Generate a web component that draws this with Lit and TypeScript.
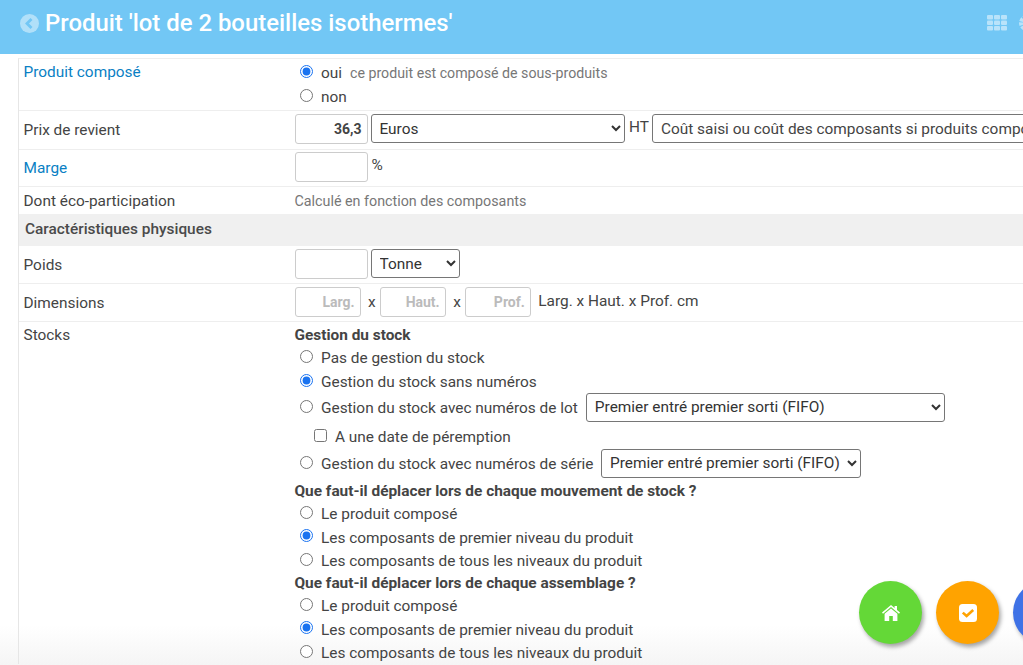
import { LitElement, html, svg, css } from "lit";
import { customElement } from "lit/decorators.js";

const radio = (name: string, label: string, checked = false) => html`
  <label class="opt"><input type="radio" name=${name} ?checked=${checked} /><span>${label}</span></label>`;
const radioS = (name: string, label: string, checked = false) => html`
  <label class="opt slim"><input type="radio" name=${name} ?checked=${checked} /><span>${label}</span></label>`;

@customElement("app-root")
export class AppRoot extends LitElement {
  static styles = css`
    :host {
      display: block;
      position: relative;
      width: 1023px;
      height: 665px;
      overflow: hidden;
      background: linear-gradient(#fff 625px, #f5f5f5 665px);
      font-family: Roboto, "Liberation Sans", sans-serif;
      font-size: 15.4px;
      color: #444;
    }
    * { box-sizing: border-box; }
    .header {
      height: 54px;
      background: #72c7f5;
      display: flex;
      align-items: center;
      padding: 0 0 8px 20px;
      color: #fff;
      white-space: nowrap;
    }
    .back { width: 19px; height: 19px; flex: none; margin-right: 6px; }
    h1 { margin: 0; font-size: 23.9px; font-weight: 500; flex: 1; }
    .apps { width: 20px; height: 16px; flex: none; margin-right: 11px; }
    .gear { width: 18px; height: 18px; flex: none; margin-right: -13px; }
    .main {
      margin: 4px 0 0 18px;
      border-left: 1px solid #e6e6e6;
      border-top: 1px solid #eee;
      width: 1100px;
    }
    .row {
      display: grid;
      grid-template-columns: 271px 1fr;
      padding-left: 4.5px;
      border-bottom: 1px solid #eee;
    }
    .row > .lab { line-height: 18px; }
    .blue { color: #0a7fc4; }
    .r1 { height: 52px; padding-top: 1px; }
    .r1 .lab { padding-top: 3px; }
    .r2 { height: 39px; padding-top: 3px; }
    .r2 .lab { padding-top: 7px; }
    .r3 { height: 37px; padding-top: 2px; }
    .r3 .lab { padding-top: 7px; }
    .r4 { height: 27px; align-items: center; padding-top: 1px; border-bottom: 0; }
    .r5 { height: 38px; padding-top: 3px; }
    .r5 .lab { padding-top: 7px; }
    .stocks { border-bottom: 0; padding-top: 4px; }
    .section {
      height: 32px;
      background: #f0f0f0;
      padding: 0 0 2px 6px;
      display: flex;
      align-items: center;
      font-weight: 500;
      color: #4a4a4a;
    }
    .val { display: flex; align-items: flex-start; gap: 3px; white-space: nowrap; }
    .val.mid { align-items: center; }
    .val > span { line-height: 26px; }
    .opt { display: flex; align-items: center; height: 24px; color: #444; white-space: nowrap; }
    .opt > span { padding-top: 2px; }
    .opt.slim { height: 23.5px; }
    .opt input { margin: 0 8.5px 2px 5px; width: 13px; height: 13px; flex: none; accent-color: #1a73f0; }
    .opt .hint { color: #777; font-size: 14.2px; margin-left: 8px; }
    .muted { color: #777; font-size: 14.3px; }
    .num {
      font: inherit;
      font-size: 14px;
      width: 73px;
      height: 30px;
      border: 1px solid #ccc;
      border-radius: 3px;
      background: #fff;
      text-align: right;
      padding: 0 5px;
      font-weight: 700;
      color: #444;
      outline: none;
    }
    .dim { width: 66px; }
    .dim::placeholder { color: #bbb; font-weight: 700; opacity: 1; }
    select {
      font: inherit;
      height: 29px;
      border: 1px solid #767676;
      border-radius: 3px;
      background: #fff;
      color: #333;
      padding: 0 4px;
    }
    .txt {
      font: inherit;
      width: 420px;
      height: 29px;
      border: 1px solid #767676;
      border-radius: 3px;
      padding: 0 8px;
      color: #444;
      outline: none;
    }
    .val > .x { margin: 0 1px 0 4.5px; line-height: 30px; }
    .val > .dimtext { margin-left: 4.5px; line-height: 28px; }
    .ht { margin-left: 1.5px; }
    .pct { margin-left: 1px; }
    .stack { display: flex; flex-direction: column; }
    h4 { margin: 0; font-size: 15.4px; font-weight: 700; color: #444; line-height: 18px; height: 19px; }
    .h-move { margin: 6.5px 0 1px; }
    .h-build { margin: 1.5px 0 1px; }
    .opt.tall { height: 28px; }
    .opt.tall2 { height: 24px; }
    .opt.chk { height: 30px; padding-left: 14px; }
    .opt.chk input { margin-left: 5px; }
    .opt select { margin-left: 8px; }
    .opt .s-euro { margin: 0; }
    .opt.tall2 select { margin-left: 7.5px; }
    .w-euro { width: 254px; }
    .w-tonne { width: 89px; }
    .w-lot { width: 359px; }
    .w-serie { width: 260px; }
    .fab {
      position: absolute;
      top: 581px;
      width: 63px;
      height: 63px;
      border-radius: 50%;
      display: flex;
      align-items: center;
      justify-content: center;
      box-shadow: 2px 3px 4px rgba(0, 0, 0, 0.35);
    }
    .home { left: 859px; background: #64d837; }
    .todo { left: 936px; background: #ffa300; }
    .third { left: 1013px; background: #3f72e6; }
  `;

  render() {
    return html`
      <div class="header">
        <svg class="back" viewBox="0 0 19 19">
          <circle cx="9.5" cy="9.5" r="9.5" fill="#fff" opacity=".45" />
          <path d="M11.5 5 7 9.5l4.5 4.5" fill="none" stroke="#72c7f5" stroke-width="2.8" />
        </svg>
        <h1>Produit 'lot de 2 bouteilles isothermes'</h1>
        <svg class="apps" viewBox="0 0 20 16" fill="#fff" opacity=".5">
          ${[0, 5.5, 11].map(y => [0, 7, 14].map(x => svg`<rect x=${x} y=${y} width="6" height="4.6" rx="1" />`))}
        </svg>
        <svg class="gear" viewBox="0 0 18 18">
          <circle cx="9" cy="9" r="6" fill="none" stroke="#fff" stroke-width="4" stroke-dasharray="3 1" opacity=".5" />
        </svg>
      </div>
      <div class="main">
        <div class="row r1">
          <div class="lab blue">Produit composé</div>
          <div class="stack">
            <label class="opt"><input type="radio" name="c" checked /><span>oui</span><span class="hint">ce produit est composé de sous-produits</span></label>
            ${radio("c", "non")}
          </div>
        </div>
        <div class="row r2">
          <div class="lab">Prix de revient</div>
          <div class="val">
            <input class="num" value="36,3" />
            <select class="w-euro"><option>Euros</option></select>
            <span class="ht">HT</span>
            <input class="txt" value="Coût saisi ou coût des composants si produits composés" />
          </div>
        </div>
        <div class="row r3">
          <div class="lab blue">Marge</div>
          <div class="val"><input class="num" /><span class="pct">%</span></div>
        </div>
        <div class="row r4">
          <div class="lab">Dont éco-participation</div>
          <div class="val mid muted">Calculé en fonction des composants</div>
        </div>
        <div class="section">Caractéristiques physiques</div>
        <div class="row r5">
          <div class="lab">Poids</div>
          <div class="val"><input class="num" /><select class="w-tonne"><option>Tonne</option></select></div>
        </div>
        <div class="row r5">
          <div class="lab">Dimensions</div>
          <div class="val">
            <input class="num dim" placeholder="Larg." /><span class="x">x</span>
            <input class="num dim" placeholder="Haut." /><span class="x">x</span>
            <input class="num dim" placeholder="Prof." /><span class="dimtext">Larg. x Haut. x Prof. cm</span>
          </div>
        </div>
        <div class="row stocks">
          <div class="lab">Stocks</div>
          <div class="stack">
            <h4>Gestion du stock</h4>
            ${radio("g", "Pas de gestion du stock")}
            ${radio("g", "Gestion du stock sans numéros", true)}
            <label class="opt tall"><input type="radio" name="g" /><span>Gestion du stock avec numéros de lot</span>
              <select class="w-lot"><option>Premier entré premier sorti (FIFO)</option></select></label>
            <label class="opt chk"><input type="checkbox" /><span>A une date de péremption</span></label>
            <label class="opt tall2"><input type="radio" name="g" /><span>Gestion du stock avec numéros de série</span>
              <select class="w-serie"><option>Premier entré premier sorti (FIFO)</option></select></label>
            <h4 class="h-move">Que faut-il déplacer lors de chaque mouvement de stock ?</h4>
            ${radioS("m", "Le produit composé")}
            ${radioS("m", "Les composants de premier niveau du produit", true)}
            ${radioS("m", "Les composants de tous les niveaux du produit")}
            <h4 class="h-build">Que faut-il déplacer lors de chaque assemblage ?</h4>
            ${radioS("a", "Le produit composé")}
            ${radioS("a", "Les composants de premier niveau du produit", true)}
            ${radioS("a", "Les composants de tous les niveaux du produit")}
          </div>
        </div>
      </div>
      <div class="fab home">
        <svg width="18" height="16" viewBox="0 0 18 16" fill="#fff">
          <path d="M9 0 0 7.6l1 1.2L9 2l8 6.8 1-1.2-3-2.5V1h-2.4v2.1z" />
          <path d="M9 3.4 2.6 8.8V16h4.6v-5h3.6v5h4.6V8.8z" />
        </svg>
      </div>
      <div class="fab todo">
        <svg width="18" height="18" viewBox="0 0 18 18">
          <rect width="18" height="18" rx="3.5" fill="#fff" />
          <path d="M3.8 8.6 7.6 12l6.6-6" fill="none" stroke="#ffa300" stroke-width="2.6" />
        </svg>
      </div>
      <div class="fab third"></div>
    `;
  }
}
